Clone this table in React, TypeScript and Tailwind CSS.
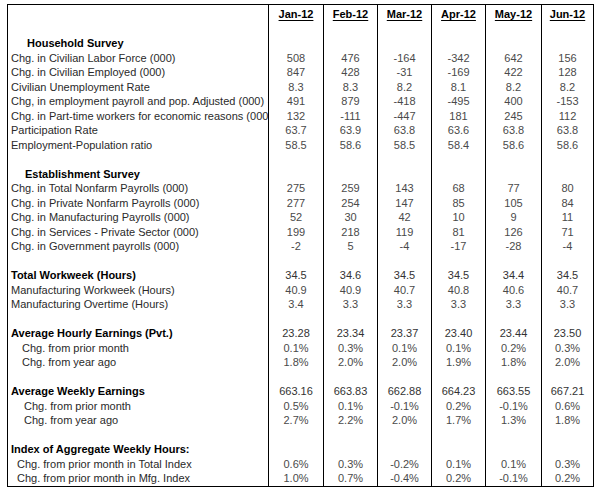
const months = ["Jan-12", "Feb-12", "Mar-12", "Apr-12", "May-12", "Jun-12"];

type Row =
  | { kind: "blank" }
  | { kind: "section"; label: string; indent: string; values?: string[] }
  | { kind: "data"; label: string; indent: string; values: string[] };

const rows: Row[] = [
  { kind: "blank" },
  { kind: "section", label: "Household Survey", indent: "pl-[19px]" },
  { kind: "data", label: "Chg. in Civilian Labor Force (000)", indent: "pl-[3px]", values: ["508", "476", "-164", "-342", "642", "156"] },
  { kind: "data", label: "Chg. in Civilian Employed (000)", indent: "pl-[3px]", values: ["847", "428", "-31", "-169", "422", "128"] },
  { kind: "data", label: "Civilian Unemployment Rate", indent: "pl-[3px]", values: ["8.3", "8.3", "8.2", "8.1", "8.2", "8.2"] },
  { kind: "data", label: "Chg, in employment payroll and pop. Adjusted (000)", indent: "pl-[3px]", values: ["491", "879", "-418", "-495", "400", "-153"] },
  { kind: "data", label: "Chg. in Part-time workers for economic reasons (000)", indent: "pl-[3px]", values: ["132", "-111", "-447", "181", "245", "112"] },
  { kind: "data", label: "Participation Rate", indent: "pl-[3px]", values: ["63.7", "63.9", "63.8", "63.6", "63.8", "63.8"] },
  { kind: "data", label: "Employment-Population ratio", indent: "pl-[3px]", values: ["58.5", "58.6", "58.5", "58.4", "58.6", "58.6"] },
  { kind: "blank" },
  { kind: "section", label: "Establishment Survey", indent: "pl-[17px]" },
  { kind: "data", label: "Chg. in Total Nonfarm Payrolls (000)", indent: "pl-[3px]", values: ["275", "259", "143", "68", "77", "80"] },
  { kind: "data", label: "Chg. in Private Nonfarm Payrolls (000)", indent: "pl-[3px]", values: ["277", "254", "147", "85", "105", "84"] },
  { kind: "data", label: "Chg. in Manufacturing Payrolls (000)", indent: "pl-[3px]", values: ["52", "30", "42", "10", "9", "11"] },
  { kind: "data", label: "Chg. in Services - Private Sector (000)", indent: "pl-[3px]", values: ["199", "218", "119", "81", "126", "71"] },
  { kind: "data", label: "Chg. in Government payrolls (000)", indent: "pl-[3px]", values: ["-2", "5", "-4", "-17", "-28", "-4"] },
  { kind: "blank" },
  { kind: "section", label: "Total Workweek (Hours)", indent: "pl-[3px]", values: ["34.5", "34.6", "34.5", "34.5", "34.4", "34.5"] },
  { kind: "data", label: "Manufacturing Workweek (Hours)", indent: "pl-[3px]", values: ["40.9", "40.9", "40.7", "40.8", "40.6", "40.7"] },
  { kind: "data", label: "Manufacturing Overtime (Hours)", indent: "pl-[3px]", values: ["3.4", "3.3", "3.3", "3.3", "3.3", "3.3"] },
  { kind: "blank" },
  { kind: "section", label: "Average Hourly Earnings (Pvt.)", indent: "pl-[3px]", values: ["23.28", "23.34", "23.37", "23.40", "23.44", "23.50"] },
  { kind: "data", label: "Chg. from prior month", indent: "pl-[14px]", values: ["0.1%", "0.3%", "0.1%", "0.1%", "0.2%", "0.3%"] },
  { kind: "data", label: "Chg. from year ago", indent: "pl-[14px]", values: ["1.8%", "2.0%", "2.0%", "1.9%", "1.8%", "2.0%"] },
  { kind: "blank" },
  { kind: "section", label: "Average Weekly Earnings", indent: "pl-[3px]", values: ["663.16", "663.83", "662.88", "664.23", "663.55", "667.21"] },
  { kind: "data", label: "Chg. from prior month", indent: "pl-[16px]", values: ["0.5%", "0.1%", "-0.1%", "0.2%", "-0.1%", "0.6%"] },
  { kind: "data", label: "Chg. from year ago", indent: "pl-[16px]", values: ["2.7%", "2.2%", "2.0%", "1.7%", "1.3%", "1.8%"] },
  { kind: "blank" },
  { kind: "section", label: "Index of Aggregate Weekly Hours:", indent: "pl-[3px]" },
  { kind: "data", label: "Chg. from prior month in Total Index", indent: "pl-[9px]", values: ["0.6%", "0.3%", "-0.2%", "0.1%", "0.1%", "0.3%"] },
  { kind: "data", label: "Chg. from prior month in Mfg. Index", indent: "pl-[9px]", values: ["1.0%", "0.7%", "-0.4%", "0.2%", "-0.1%", "0.2%"] },
];

const grid = "grid grid-cols-[260px_55px_54px_54px_54px_56px_52px]";
// numbers print a touch lighter than the row labels
const cell = "border-l border-black text-center text-[#4a4a4a]";

function TableRow({ row }: { row: Row }) {
  const label = row.kind === "blank" ? "" : row.label;
  const values = row.kind === "blank" ? [] : row.values ?? [];
  const bold = row.kind === "section";
  return (
    <div className={`${grid} h-[14.5px] leading-[14.5px]`}>
      {/* long labels get clipped by the first column line, like the sheet */}
      <div
        className={`overflow-hidden whitespace-nowrap ${row.kind === "blank" ? "" : row.indent} ${
          bold ? "font-bold text-black" : "text-[#2a2a2a]"
        }`}
      >
        {label}
      </div>
      {months.map((m, i) => (
        <div key={m} className={bold ? `${cell} text-[#333]` : cell}>
          {values[i] ?? ""}
        </div>
      ))}
    </div>
  );
}

export default function App() {
  return (
    <div className="w-[601px] h-[491px] bg-white pt-[4px] pl-[7px] font-['Liberation_Sans',Arial,sans-serif] text-[11px]">
      <div className="w-[587px] border border-black">
        <div className={`${grid} h-[16.5px] leading-[14.5px] items-end`}>
          <div />
          {months.map((m) => (
            <div key={m} className="border-l border-black h-full flex items-end justify-center">
              <span className="font-bold text-black underline underline-offset-2 leading-[14.5px]">{m}</span>
            </div>
          ))}
        </div>
        {rows.map((r, i) => (
          <TableRow key={i} row={r} />
        ))}
      </div>
    </div>
  );
}
